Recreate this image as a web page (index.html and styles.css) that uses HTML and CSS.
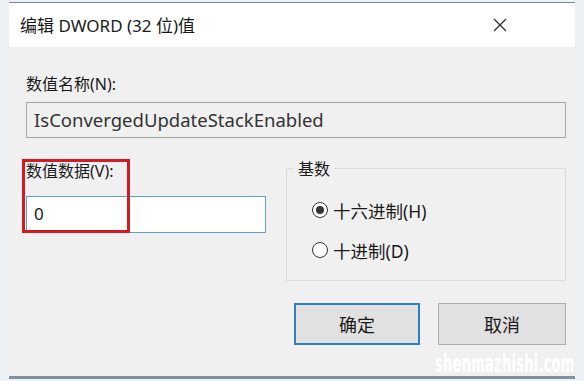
FILE: index.html
```html
<!DOCTYPE html>
<html lang="zh-CN">
<head>
<meta charset="utf-8">
<link rel="stylesheet" href="styles.css">
</head>
<body>
<div class="window">
  <div class="titlebar">
    <span class="title">编辑 DWORD (32 位)值</span>
    <svg class="close" width="14" height="14" viewBox="0 0 14 14"><path d="M1 1L13 13M13 1L1 13" stroke="#333" stroke-width="1.4" fill="none"/></svg>
  </div>
  <div class="content">
    <div class="label">数值名称(N):</div>
    <div class="field name">IsConvergedUpdateStackEnabled</div>
    <div class="row">
      <div class="data-col">
        <div class="label">数值数据(V):</div>
        <div class="field value">0</div>
        <div class="highlight"></div>
      </div>
      <div class="group">
        <div class="legend">基数</div>
        <div class="radio"><span class="dot checked"></span><span>十六进制(H)</span></div>
        <div class="radio"><span class="dot"></span><span>十进制(D)</span></div>
      </div>
    </div>
    <div class="buttons">
      <div class="btn ok">确定</div>
      <div class="btn cancel">取消</div>
    </div>
  </div>
  <div class="watermark">shenmazhishi.com</div>
</div>
</body>
</html>
```
FILE: styles.css
```css
* { box-sizing: border-box; }
html, body { margin: 0; padding: 0; }
body {
  background: #edf1f5;
  width: 584px;
  height: 381px;
  overflow: hidden;
  font-family: "Noto Sans", "Noto Sans CJK SC", sans-serif;
  color: #1a1a1a;
}
.window {
  position: relative;
  margin: 2px 0 0 9px;
  width: 566px;
  height: 377px;
  border-top: 1px solid #7d8791;
  border-bottom: 3px solid #8190a2;
  background: #f0f0f0;
  display: flex;
  flex-direction: column;
}
.titlebar {
  height: 44px;
  background: #ffffff;
  display: flex;
  align-items: center;
  justify-content: space-between;
  padding: 0 68px 2px 11px;
}
.title {
  font-size: 17px;
  color: #1a1a1a;
}
.close { display: block; margin-top: 2px; }
.content {
  flex: 1;
  padding: 26px 0 0 17px;
  display: flex;
  flex-direction: column;
}
.label {
  font-size: 16px;
  line-height: 22px;
  color: #1a1a1a;
}
.field {
  height: 36px;
  font-size: 18.5px;
  line-height: 34px;
  padding-left: 7px;
}
.name {
  margin-top: 7px;
  width: 540px;
  border: 1px solid #a3a3a3;
  background: #f0f0f0;
  color: #333;
}
.row {
  display: flex;
  margin-top: 22px;
  height: 116px;
}
.data-col {
  position: relative;
  width: 260px;
}
.value {
  margin-top: 14px;
  width: 240px;
  height: 37px;
  border: 1px solid #5ba3d4;
  background: #ffffff;
  font-size: 17px;
}
.highlight {
  position: absolute;
  left: -4px;
  top: -1px;
  width: 108px;
  height: 74px;
  border: 3px solid #d41a22;
}
.group {
  position: relative;
  width: 280px;
  height: 113px;
  margin-top: 8px;
  border: 1px solid #dcdcdc;
  padding: 21px 0 0 25px;
}
.legend {
  position: absolute;
  left: 7px;
  top: -11px;
  background: #f0f0f0;
  padding: 0 4px;
  font-size: 16px;
  line-height: 22px;
}
.radio {
  display: flex;
  align-items: center;
  gap: 5px;
  font-size: 17.5px;
  height: 40px;
}
.dot {
  width: 16px;
  height: 16px;
  border: 1px solid #333;
  border-radius: 50%;
  background: #fff;
  display: flex;
  align-items: center;
  justify-content: center;
}
.dot.checked::after {
  content: "";
  width: 8px;
  height: 8px;
  border-radius: 50%;
  background: #333;
}
.buttons {
  display: flex;
  gap: 18px;
  margin-top: 27px;
  padding-left: 268px;
}
.btn {
  height: 42px;
  background: #e1e1e1;
  display: flex;
  align-items: center;
  justify-content: center;
  font-size: 18px;
  color: #1a1a1a;
}
.ok {
  width: 126px;
  border: 2px solid #2f7dc3;
}
.cancel {
  width: 128px;
  border: 1px solid #adadad;
}
.watermark {
  position: absolute;
  right: 0px;
  bottom: -2px;
  font-family: "DejaVu Sans Condensed", "DejaVu Sans", sans-serif;
  font-weight: bold;
  font-size: 24px;
  color: #ffffff;
  letter-spacing: 0.5px;
  transform: scaleX(0.6);
  transform-origin: right bottom;
}
```
